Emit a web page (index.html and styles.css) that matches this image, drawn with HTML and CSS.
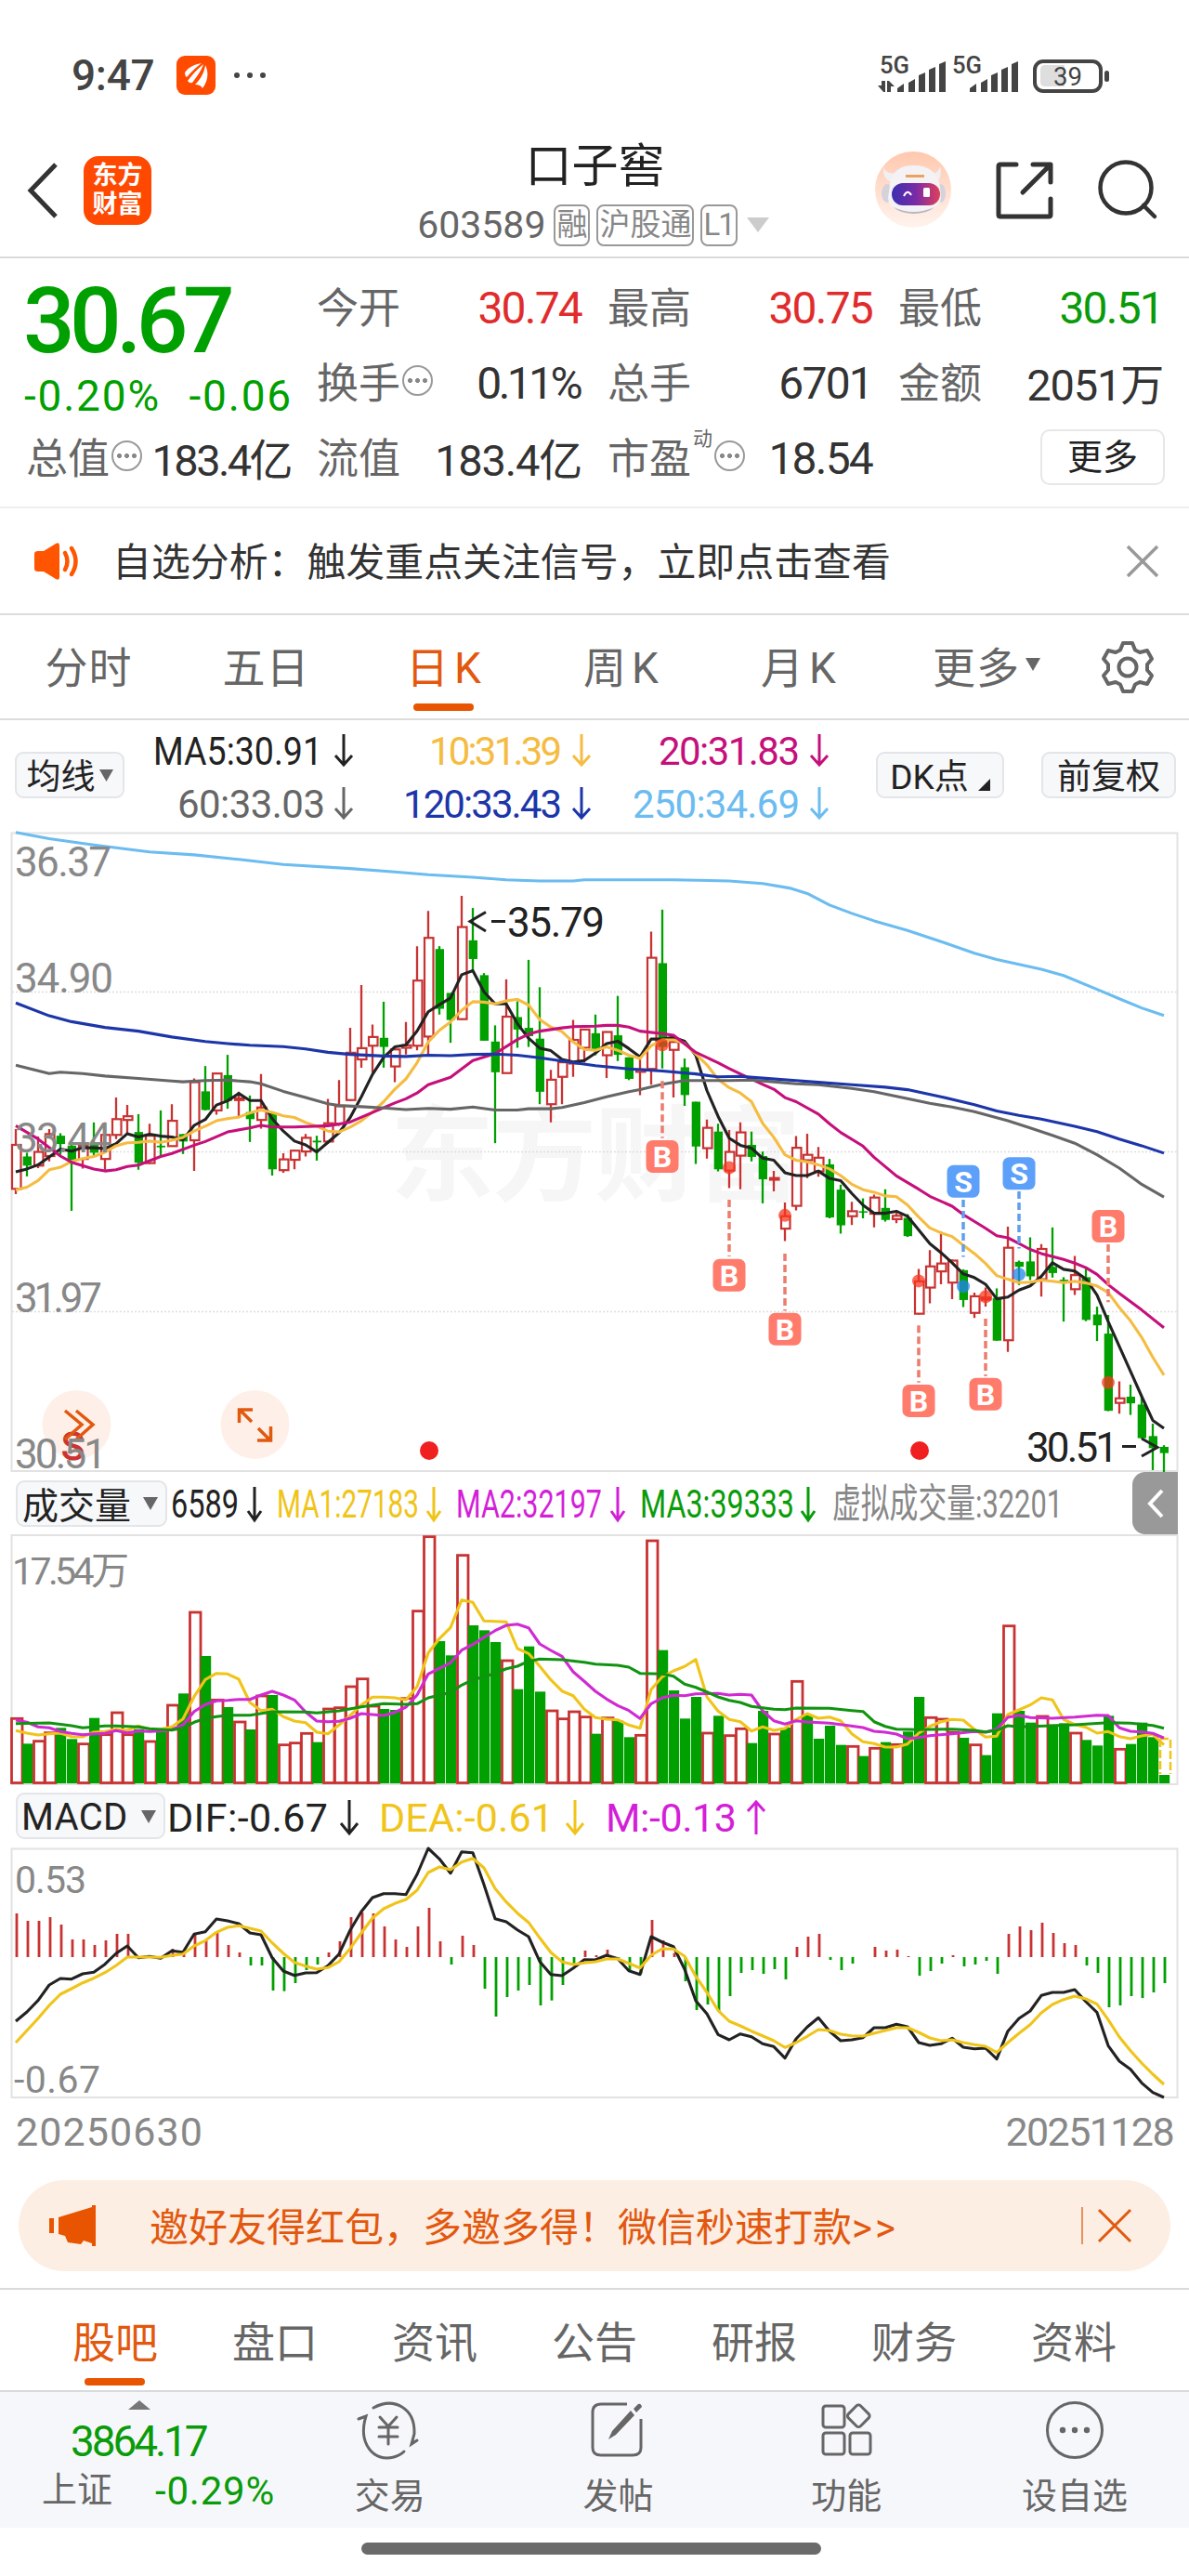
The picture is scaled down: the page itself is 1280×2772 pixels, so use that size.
FILE: index.html
```html
<!DOCTYPE html>
<html lang="zh-CN">
<head>
  <meta charset="UTF-8" />
  <meta name="viewport" content="width=device-width, initial-scale=1" />
  <title>口子窖 603589</title>
  <link rel="stylesheet" href="styles.css">
</head>
<body>
  <div class="status-bar">
    <span class="clock">9:47</span>
    <svg class="app-icon" width="42" height="42" viewBox="0 0 42 42">
      <rect width="42" height="42" rx="9" fill="#ff4a00"/>
      <path d="M9 18 C13 12 20 9 27 8 C19 14 15 19 11 23 Q9 22 9 18Z M12 27 C17 20 23 14 29 9 C27 16 22 22 17 29 Q14 30 12 27Z M20 31 C27 24 30 17 31 10 C35 18 34 27 28 35 Q26 31 20 31Z" fill="#fff"/>
    </svg>
    <svg class="more-dots" width="36" height="10" viewBox="0 0 36 10" fill="#444"><circle cx="4" cy="5" r="3"/><circle cx="18" cy="5" r="3"/><circle cx="32" cy="5" r="3"/></svg>
    <svg class="signals" width="256" height="64" viewBox="940 48 256 64" fill="#444">
      <text x="947" y="78" font-size="25" font-weight="500" textLength="32" lengthAdjust="spacingAndGlyphs">5G</text>
      <text x="1025" y="78" font-size="25" font-weight="500" textLength="32" lengthAdjust="spacingAndGlyphs">5G</text>
      <path d="M949 86h4v12h-2l-6-7h4z M955 98V86h2l6 6h-4v6z"/>
      <path d="M966 98v-4l7-5v9z M978 98V88l7-4v14z M989 98V80l7-3v21z M1000 98V74l7-3v27z M1011 98V68l7-3v33z"/>
      <path d="M1044 98v-4l7-5v9z M1056 98V88l7-4v14z M1067 98V80l7-3v21z M1078 98V74l7-3v27z M1089 98V68l7-3v33z"/>
      <rect x="1114" y="65" width="71" height="32" rx="9" fill="none" stroke="#444" stroke-width="4"/>
      <path d="M1125 69h21v23h-21q-5 0-5-5V74q0-5 5-5z" fill="#dedede"/>
      <rect x="1189" y="75" width="5" height="12" rx="2.5"/>
      <text x="1134" y="91" font-size="28" textLength="31" lengthAdjust="spacingAndGlyphs">39</text>
    </svg>
  </div>

  <header class="header">
    <div class="header-left">
      <svg width="34" height="60" viewBox="0 0 34 60" fill="none" stroke="#333" stroke-width="5"><path d="M31 2 L4 30 L31 58"/></svg>
      <div class="logo"><span>东方</span><span>财富</span></div>
    </div>
    <div class="stock">
      <h1 class="stock-name">口子窖</h1>
      <div class="stock-code">
        <span class="code">603589</span>
        <span class="tag">融</span><span class="tag">沪股通</span><span class="tag level">L1</span>
        <svg width="24" height="16" viewBox="0 0 24 16"><path d="M0 0H24L12 16Z" fill="#ccc"/></svg>
      </div>
    </div>
    <div class="header-right">
      <svg width="82" height="82" viewBox="0 0 82 82">
        <defs>
          <linearGradient id="halo" x1="0" y1="0" x2="0" y2="1"><stop offset="0" stop-color="#ffc8ae"/><stop offset="1" stop-color="#fff4ee"/></linearGradient>
          <linearGradient id="visor" x1="0" y1="0" x2="1" y2="0"><stop offset="0" stop-color="#3a2fb0"/><stop offset=".5" stop-color="#7a2ba6"/><stop offset="1" stop-color="#e0405a"/></linearGradient>
        </defs>
        <circle cx="41" cy="41" r="41" fill="url(#halo)"/>
        <path d="M9 17 Q8 30 18 33 L24 23 Q12 25 9 17Z M70 16 Q73 30 64 34 L58 23 Q68 25 70 16Z" fill="#f2eff2"/>
        <ellipse cx="13" cy="45" rx="6" ry="10" fill="#d5d2da"/><ellipse cx="71" cy="45" rx="5" ry="10" fill="#d5d2da"/>
        <path d="M16 36 Q18 15 42 15 Q66 15 70 38 L71 50 Q68 66 41 66 Q15 65 14 50Z" fill="#f4f2f5"/>
        <path d="M20 60 Q41 70 64 60 Q56 67 41 67 Q26 66 20 60Z" fill="#b9b5c0"/>
        <rect x="33" y="25" width="20" height="3" fill="#eba25f"/>
        <rect x="18" y="34" width="52" height="24" rx="12" fill="url(#visor)"/>
        <path d="M31 48 Q35 40 39 47" fill="none" stroke="#fff" stroke-width="2"/>
        <rect x="52" y="39" width="7" height="10" rx="1.5" fill="#fff"/>
      </svg>
      <svg width="62" height="62" viewBox="0 0 62 62" fill="none" stroke="#333" stroke-width="5" stroke-linecap="round" stroke-linejoin="round"><path d="M22 3H5Q3 3 3 5V57Q3 59 5 59H57Q59 59 59 57V40 M40 3H59V22 M58 4L29 33"/></svg>
      <svg width="64" height="64" viewBox="0 0 64 64" fill="none" stroke="#333" stroke-width="4.5" stroke-linecap="round"><circle cx="30" cy="30" r="27.5"/><path d="M49 49L61 61"/></svg>
    </div>
  </header>

  <section class="quote">
    <div class="quote-main">
      <div class="price">30.67</div>
      <div class="change"><span class="pct">-0.20%</span><span class="diff">-0.06</span></div>
    </div>
    <div class="cell"><span class="label">今开</span><span class="value up">30.74</span></div>
    <div class="cell"><span class="label">最高</span><span class="value up">30.75</span></div>
    <div class="cell"><span class="label">最低</span><span class="value down">30.51</span></div>
    <div class="cell"><span class="label">换手</span><i class="info"></i><span class="value pct-value">0.11%</span></div>
    <div class="cell"><span class="label">总手</span><span class="value">6701</span></div>
    <div class="cell"><span class="label">金额</span><span class="value cn wide">2051万</span></div>
    <div class="cell"><span class="label">总值</span><i class="info"></i><span class="value cn">183.4亿</span></div>
    <div class="cell"><span class="label">流值</span><span class="value cn wide">183.4亿</span></div>
    <div class="cell"><span class="label">市盈</span><sup class="dyn">动</sup><i class="info"></i><span class="value">18.54</span></div>
    <div class="cell"><button class="more-btn">更多</button></div>
  </section>

  <div class="notice">
    <svg width="48" height="40" viewBox="0 0 48 40" fill="#ff5500"><path d="M0 12Q0 9 4 9H10L23 1Q27 -1 27 3V37Q27 41 23 39L10 31H4Q0 31 0 28Z"/><path d="M33 11Q38 20 33 29M40 6Q49 20 40 34" fill="none" stroke="#ff5500" stroke-width="4.5" stroke-linecap="round"/></svg>
    <p>自选分析：触发重点关注信号，立即点击查看</p>
    <svg width="34" height="34" viewBox="0 0 34 34" stroke="#999" stroke-width="3.5"><path d="M1 1L33 33M33 1L1 33"/></svg>
  </div>

  <nav class="period-tabs">
    <a>分时</a><a>五日</a><a class="k active">日K</a><a class="k">周K</a><a class="k">月K</a>
    <a class="more">更多<svg width="16" height="14" viewBox="0 0 16 14"><path d="M0 0H16L8 14Z" fill="#666"/></svg></a>
    <svg class="gear" width="58" height="58" viewBox="-29 -29 58 58" fill="none" stroke="#666" stroke-width="4" stroke-linejoin="round"><path d="M-5 -26H5L8 -18.5L13 -16L21 -18L26 -9L21 -3V3L26 9L21 18L13 16L8 18.5L5 26H-5L-8 18.5L-13 16L-21 18L-26 9L-21 3V-3L-26 -9L-21 -18L-13 -16L-8 -18.5Z"/><circle r="9.5"/></svg>
  </nav>

  <div class="ma-bar">
    <button class="pill ma-btn"><span>均线</span><svg width="15" height="13" viewBox="0 0 15 13"><path d="M0 0H15L7.500 13Z" fill="#666"/></svg></button>
    <svg class="ma-legend" width="744" height="121" viewBox="150 775 744 121">
      <g font-size="42">
        <text x="165" y="822.500" textLength="182" lengthAdjust="spacingAndGlyphs" fill="#222">MA5:30.91</text>
        <text x="462" y="822.500" textLength="143" fill="#f5bc41">10:31.39</text>
        <text x="709" y="822.500" textLength="152" fill="#c5107b">20:31.83</text>
        <text x="191" y="879.500" textLength="159" fill="#666">60:33.03</text>
        <text x="434" y="879.500" textLength="171" fill="#1c35a8">120:33.43</text>
        <text x="681" y="879.500" textLength="180" fill="#6bbcf0">250:34.69</text>
      </g>
      <g fill="none" stroke-width="3">
        <path d="M370 790V823M361 813L370 823L379 813" stroke="#222"/>
        <path d="M626 790V823M617 813L626 823L635 813" stroke="#f5bc41"/>
        <path d="M882 790V823M873 813L882 823L891 813" stroke="#c5107b"/>
        <path d="M370 847V880M361 870L370 880L379 870" stroke="#666"/>
        <path d="M626 847V880M617 870L626 880L635 870" stroke="#1c35a8"/>
        <path d="M882 847V880M873 870L882 880L891 870" stroke="#6bbcf0"/>
      </g>
    </svg>
    <button class="pill dk-btn"><span>DK点</span><svg width="13" height="13" viewBox="0 0 13 13"><path d="M13 0V13H0Z" fill="#222"/></svg></button>
    <button class="pill adj-btn"><span>前复权</span></button>
  </div>

  <svg class="chart" width="1280" height="688" viewBox="0 896 1280 688">
    <text x="420" y="1284" class="watermark" textLength="442">东方财富</text>
    <path d="M13 1067.500H1267M13 1239.500H1267M13 1411.500H1267" stroke="#ddd" stroke-width="1.500" stroke-dasharray="2 2"/>
    <rect x="12.500" y="896.500" width="1255" height="686.500" fill="none" stroke="#e2e2e2" stroke-width="2"/>
    <circle cx="82.500" cy="1533" r="37" fill="#fef0e8"/>
    <circle cx="274.500" cy="1533" r="37" fill="#fef0e8"/>
    <g id="candles"></g>
    <g id="priceLines"></g>
    <text x="66" y="1571" font-size="42" fill="#cc3330" stroke="#cc3330">S</text>
    <path d="M70 1518L88 1533L70 1549M82 1518L100 1533L82 1549" class="orange-line"/>
    <path d="M257.500 1531V1517H272M258 1517L271 1530M291.500 1535V1550H277M291 1550L278 1537" class="orange-line"/>
    <g class="axis">
      <text x="16" y="942.500" textLength="104">36.37</text>
      <text x="16" y="1067.500" textLength="106">34.90</text>
      <text x="16" y="1239.500" textLength="104">33.44</text>
      <text x="16" y="1412" textLength="94">31.97</text>
      <text x="16" y="1580" textLength="99">30.51</text>
    </g>
    <g id="marks"></g>
    <g font-size="44" fill="#222">
      <path d="M523 981.500L506 991.500L523 1002M529 991.500H544M1208 1556.500H1223M1229 1548L1246 1557.500L1229 1567" fill="none" stroke="#222" stroke-width="3"/>
      <text x="546" y="1008" textLength="105">35.79</text>
      <text x="1105" y="1572.500" textLength="99">30.51</text>
    </g>
    <circle cx="462" cy="1561" r="10" fill="#f02020"/>
    <circle cx="990" cy="1561" r="10" fill="#f02020"/>
  </svg>

  <div class="sub-bar">
    <button class="pill sub-btn vol-btn"><span>成交量</span><svg width="16" height="14" viewBox="0 0 16 14"><path d="M0 0H16L8 14Z" fill="#666"/></svg></button>
    <svg class="vol-legend" width="965" height="68" viewBox="181 1584 965 68" font-size="43">
      <text x="184" y="1633" textLength="73" lengthAdjust="spacingAndGlyphs" fill="#222">6589</text>
      <text x="298" y="1633" textLength="153" lengthAdjust="spacingAndGlyphs" fill="#f0c419">MA1:27183</text>
      <text x="491" y="1633" textLength="157" lengthAdjust="spacingAndGlyphs" fill="#d41fd8">MA2:32197</text>
      <text x="689" y="1633" textLength="166" lengthAdjust="spacingAndGlyphs" fill="#0a9b0a">MA3:39333</text>
      <text x="896" y="1633" textLength="248" lengthAdjust="spacingAndGlyphs" fill="#888">虚拟成交量:32201</text>
      <g fill="none" stroke-width="3">
        <path d="M274 1600V1636M267 1626L274 1636L281 1626" stroke="#222"/>
        <path d="M467 1600V1636M460 1626L467 1636L474 1626" stroke="#f0c419"/>
        <path d="M665 1600V1636M658 1626L665 1636L672 1626" stroke="#d41fd8"/>
        <path d="M870 1600V1636M863 1626L870 1636L877 1626" stroke="#0a9b0a"/>
      </g>
    </svg>
    <button class="collapse"><svg width="18" height="32" viewBox="0 0 18 32" fill="none" stroke="#fff" stroke-width="4"><path d="M16 2L3 16L16 30"/></svg></button>
  </div>

  <svg class="chart" width="1280" height="268" viewBox="0 1652 1280 268">
    <rect x="12.500" y="1652" width="1255" height="268" fill="none" stroke="#e2e2e2" stroke-width="2"/>
    <text x="13" y="1705" font-size="41" fill="#888" textLength="126">17.54万</text>
    <g id="volumes"></g>
    <path d="M1249 1871H1260V1909M1249 1871V1909" fill="none" stroke="#f0c419" stroke-width="2.500" stroke-dasharray="9 3"/>
    <g id="volumeLines"></g>
  </svg>

  <div class="sub-bar macd-bar">
    <button class="pill sub-btn">MACD<svg width="16" height="14" viewBox="0 0 16 14"><path d="M0 0H16L8 14Z" fill="#666"/></svg></button>
    <svg class="macd-legend" width="660" height="69" viewBox="180 1920 660 69" font-size="43">
      <text x="180" y="1971" textLength="173" fill="#222">DIF:-0.67</text>
      <text x="408" y="1971" textLength="188" fill="#f0c419">DEA:-0.61</text>
      <text x="652" y="1971" textLength="141" fill="#d41fd8">M:-0.13</text>
      <g fill="none" stroke-width="3">
        <path d="M376 1937V1973M367 1962L376 1973L385 1962" stroke="#222"/>
        <path d="M619 1937V1973M610 1962L619 1973L628 1962" stroke="#f0c419"/>
        <path d="M814 1974V1939M805 1949L814 1939L823 1949" stroke="#d41fd8"/>
      </g>
    </svg>
  </div>

  <svg class="chart" width="1280" height="269" viewBox="0 1989 1280 269">
    <rect x="12.500" y="1989.500" width="1255" height="267.500" fill="none" stroke="#e2e2e2" stroke-width="2"/>
    <g id="macdBars"></g>
    <g id="macdLines"></g>
    <g class="axis small">
      <text x="16" y="2037" textLength="77">0.53</text>
      <text x="15" y="2252" textLength="93">-0.67</text>
    </g>
  </svg>
  <div class="dates"><span>20250630</span><span class="date-end">20251128</span></div>

  <div class="invite">
    <svg width="50" height="44" viewBox="0 0 50 44" fill="#e85400"><path d="M0 14H5V30H0Z M10 13L46 2V0H50V44H46V41L37 38L34 42L20 40L17 33L10 31Z"/></svg>
    <p>邀好友得红包，多邀多得！微信秒速打款<span class="arrows">&gt;&gt;</span></p>
    <i class="invite-sep"></i>
    <svg width="36" height="36" viewBox="0 0 36 36" stroke="#e2580e" stroke-width="3"><path d="M1 1L35 35M35 1L1 35"/></svg>
  </div>

  <nav class="info-tabs">
    <a class="active">股吧</a><a>盘口</a><a>资讯</a><a>公告</a><a>研报</a><a>财务</a><a>资料</a>
  </nav>

  <footer class="toolbar">
    <div class="index">
      <svg width="24" height="10" viewBox="0 0 24 10"><path d="M12 0L24 10H0Z" fill="#777"/></svg>
      <div class="index-value">3864.17</div>
      <div class="index-row"><span class="index-name">上证</span><span class="index-pct">-0.29%</span></div>
    </div>
    <div class="tool">
      <svg width="72" height="66" viewBox="384 2584 72 66" fill="none" stroke="#666" stroke-width="3" stroke-linecap="round"><path d="M402 2592C424 2580 447 2592 446 2620L443 2631L449 2627 M386 2604L394 2601C385 2630 402 2651 424 2645Q431 2643 435 2639"/><path d="M409 2602L418 2612L427 2602M418 2612V2631M408 2613H428M408 2623H428"/></svg>
      <span>交易</span>
    </div>
    <div class="tool">
      <svg width="60" height="66" viewBox="618 2584 60 66" fill="none" stroke="#666" stroke-width="3"><path d="M658 2588H630Q621 2588 621 2597V2635Q621 2643 630 2643H664Q673 2643 673 2635V2604"/><path d="M638 2626L642 2617L662 2595L666 2600L646 2621Z M665 2593L670 2588Q673 2587 674 2591L668 2597Z" fill="#666" stroke="none"/></svg>
      <span>发帖</span>
    </div>
    <div class="tool">
      <svg width="60" height="66" viewBox="846 2584 60 66" fill="none" stroke="#666" stroke-width="3"><rect x="851" y="2590" width="23" height="23" rx="3"/><rect x="851" y="2619" width="23" height="23" rx="3"/><rect x="880" y="2619" width="22" height="23" rx="3"/><rect x="880" y="2591.500" width="18.500" height="18.500" rx="3" transform="rotate(45 889.250 2600.750)"/></svg>
      <span>功能</span>
    </div>
    <div class="tool">
      <svg width="66" height="66" viewBox="0 0 66 66" fill="none" stroke="#666" stroke-width="3"><circle cx="33" cy="32" r="29.500"/><g fill="#666" stroke="none"><circle cx="20" cy="32" r="3.200"/><circle cx="33" cy="32" r="3.200"/><circle cx="46" cy="32" r="3.200"/></g></svg>
      <span>设自选</span>
    </div>
  </footer>
  <div class="home-area"><div class="home-bar"></div></div>

  <script src="chart.js"></script>
</body>
</html>
```
FILE: styles.css
```css
* {
  box-sizing: border-box;
}
html, body {
  margin: 0; padding: 0;
  background: #fff;
  font-family: Roboto, "Noto Sans CJK SC", sans-serif;
  color: #333;
}
body {
  width: 1280px;
  height: 2772px;
  overflow: hidden;
}
svg {
  display: block;
  flex: none;
  overflow: visible;
}
button {
  font-family: inherit;
  padding: 0;
}
p, h1 {
  margin: 0;
}

/* status bar */
.status-bar {
  height: 130px;
  padding: 32px 84px 0 77px;
  display: flex;
  align-items: center;
}
.clock {
  font-size: 46px;
  font-weight: 500;
  color: #444;
  width: 113px;
  letter-spacing: -0.3px;
}
.more-dots {
  margin-left: 19px;
}
.signals {
  margin-left: auto;
}

/* header */
.header {
  height: 148px;
  padding: 0 34px 0 29px;
  border-bottom: 2px solid #d8dadb;
  display: flex;
  justify-content: space-between;
}
.header-left {
  width: 300px;
  padding-top: 38px;
  display: flex;
  align-items: flex-start;
}
.header-left > svg {
  margin-top: 7px;
}
.logo {
  width: 73px;
  height: 74px;
  margin-left: 27px;
  padding-top: 6px;
  border-radius: 16px;
  background: #ff4800;
  color: #fff;
  font-size: 27px;
  font-weight: bold;
  line-height: 31px;
  text-align: center;
}
.logo span {
  display: block;
}
.stock {
  padding-left: 6px;
}
.stock-name {
  margin-top: 20px;
  font-size: 50px;
  line-height: 58px;
  font-weight: normal;
  color: #222;
  text-align: center;
  padding-left: 4px;
}
.stock-code {
  margin-top: 11px;
  height: 46px;
  display: flex;
  align-items: center;
  gap: 7px;
  color: #888;
}
.code {
  font-size: 41px;
  color: #666;
  margin-right: 2px;
}
.tag {
  height: 45px;
  padding: 0 1px;
  border: 2px solid #999;
  border-radius: 8px;
  font-size: 33px;
  line-height: 39px;
}
.level {
  letter-spacing: -2px;
  padding: 0 2px 0 1px;
}
.stock-code svg {
  margin-left: 3px;
}
.header-right {
  display: flex;
  gap: 48px;
  padding-top: 33px;
}
.header-right svg:nth-child(2) {
  margin-top: 11px;
}
.header-right svg:nth-child(3) {
  margin: 9px 0 0 0;
}

/* quote */
.quote {
  height: 269px;
  padding: 12px 28px 0;
  display: grid;
  grid-template-columns: repeat(4, 285px);
  grid-template-rows: repeat(3, 81px);
  column-gap: 28px;
  border-bottom: 2px solid #eceef0;
}
.quote-main {
  grid-row: span 2;
  color: #00a000;
}
.price {
  margin: 11px 0 0 -3px;
  font-size: 98px;
  font-weight: 500;
  line-height: 90px;
  letter-spacing: -5.6px;
}
.change {
  margin: 7px 0 0 -2px;
  display: flex;
  justify-content: space-between;
  font-size: 46px;
  line-height: 56px;
}
.pct {
  letter-spacing: 1.8px;
}
.diff {
  letter-spacing: 1.8px;
  margin-right: -2px;
}
.cell {
  display: flex;
  align-items: center;
}
.label {
  font-size: 45px;
  line-height: 60px;
  margin-top: 4px;
  color: #666;
  white-space: nowrap;
}
.value {
  margin: 2px 0 0 auto;
  font-size: 48px;
  letter-spacing: -1.8px;
  white-space: nowrap;
}
.pct-value {
  letter-spacing: -3.6px;
  padding-right: 2px;
}
.cn {
  letter-spacing: -2.6px;
  font-size: 47px;
  margin-top: -3px;
}
.cn.wide {
  letter-spacing: -1.2px;
}
.up {
  color: #e02c2c;
}
.down {
  color: #0a9b0a;
}
.info {
  width: 33px;
  height: 33px;
  margin: -4px 0 0 2px;
  border: 2px solid #999;
  border-radius: 50%;
  background:
    radial-gradient(circle, #888 2.2px, transparent 2.8px) -8px 0 / 29px 29px no-repeat,
    radial-gradient(circle, #888 2.2px, transparent 2.8px) 0 0 / 29px 29px no-repeat,
    radial-gradient(circle, #888 2.2px, transparent 2.8px) 8px 0 / 29px 29px no-repeat;
}
.dyn {
  font-size: 21px;
  line-height: 24px;
  align-self: flex-start;
  margin: 8px 0 0 2px;
  color: #666;
}
.more-btn {
  width: 134px;
  height: 60px;
  margin: -2px -2px 0 auto;
  border: 2px solid #e5e7e9;
  border-radius: 10px;
  background: #fff;
  font-size: 38px;
  line-height: 50px;
  color: #222;
}

/* notice */
.notice {
  height: 115px;
  padding: 0 33px 0 37px;
  border-bottom: 2px solid #dcdcdc;
  display: flex;
  align-items: center;
}
.notice p {
  margin: -4px auto 0 36px;
  font-size: 41.9px;
}

/* period tabs */
.period-tabs {
  height: 113px;
  border-bottom: 2px solid #dcdcdc;
  display: flex;
}
.period-tabs a {
  width: 191px;
  padding-bottom: 5px;
  display: flex;
  align-items: center;
  justify-content: center;
  font-size: 46px;
  letter-spacing: 1px;
  color: #666;
  position: relative;
}
.period-tabs .k {
  letter-spacing: 6px;
  padding-left: 6px;
}
.period-tabs .more {
  gap: 6px;
  padding-left: 23px;
}
.period-tabs .active, .info-tabs .active {
  color: #e2580e;
}
.active::after {
  content: "";
  position: absolute;
  bottom: 8px;
  left: calc(50% - 33px);
  width: 65px;
  height: 8px;
  border-radius: 4px;
  background: #e85400;
}
.gear {
  margin: 27px 0 0 39px;
}

/* moving average row */
.pill {
  height: 50px;
  border: 2px solid #e3e5e9;
  border-radius: 9px;
  background: #f7f8fa;
  color: #222;
  display: flex;
  align-items: center;
  justify-content: center;
}
.pill span {
  margin-top: -3px;
}
.ma-bar {
  height: 121px;
  padding: 0 14px 0 16px;
  display: flex;
  align-items: center;
}
.ma-bar .pill {
  margin-top: -3px;
  font-size: 37px;
}
.ma-btn {
  width: 118px;
  gap: 4px;
}
.ma-legend {
  margin-left: 16px;
}
.dk-btn {
  width: 138px;
  margin-left: 49px;
  gap: 10px;
}
.dk-btn svg {
  align-self: flex-end;
  margin-bottom: 6px;
}
.adj-btn {
  width: 145px;
  margin-left: auto;
}

/* charts */
.watermark {
  font-size: 112px;
  font-weight: bold;
  fill: #f6f6f6;
}
.axis {
  font-size: 44px;
  fill: #888;
}
.axis.small {
  font-size: 41px;
}
.orange-line {
  fill: none;
  stroke: #e2580e;
  stroke-width: 3.500px;
}
.mark-text {
  font-size: 32px;
  font-weight: bold;
  fill: #fff;
  text-anchor: middle;
}
.sub-bar {
  height: 68px;
  padding: 0 12px 0 17px;
  display: flex;
}
.macd-bar {
  height: 69px;
}
.sub-btn {
  width: 163px;
  margin-top: 9px;
  justify-content: space-between;
  padding: 0 8px 0 5px;
  font-size: 39px;
}
.macd-bar .sub-btn {
  width: 161px;
  padding-left: 4px;
  padding-top: 2px;
  font-size: 40px;
  letter-spacing: 0.3px;
}
.vol-legend {
  margin-left: 1px;
}
.macd-legend {
  margin-left: 2px;
}
.collapse {
  width: 49px;
  height: 67px;
  margin-left: auto;
  border: none;
  border-radius: 14px 0 0 14px;
  background: #999;
  display: flex;
  align-items: center;
  justify-content: center;
}
.dates {
  height: 88px;
  padding: 7px 17px 0;
  display: flex;
  justify-content: space-between;
  font-size: 43px;
  line-height: 58px;
  letter-spacing: 1.1px;
  color: #888;
}
.date-end {
  letter-spacing: -1.6px;
}

/* invite banner */
.invite {
  height: 98px;
  margin: 0 20px 18px;
  padding: 0 42px 0 33px;
  border-radius: 49px;
  background: #fdeee4;
  color: #e2580e;
  display: flex;
  align-items: center;
}
.invite p {
  margin: -4px auto 0 58px;
  font-size: 42px;
}
.arrows {
  letter-spacing: 3px;
}
.invite-sep {
  width: 2px;
  height: 40px;
  margin-right: 16px;
  background: #e8905f;
}

.info-tabs {
  height: 112px;
  padding: 0 38px;
  border-top: 2px solid #d8dadb;
  border-bottom: 2px solid #d8dadb;
  display: flex;
}
.info-tabs a {
  flex: 1;
  padding-bottom: 2px;
  display: flex;
  align-items: center;
  justify-content: center;
  font-size: 46px;
  color: #666;
  position: relative;
}
.info-tabs .active::after {
  bottom: 5px;
}

/* bottom toolbar */
.toolbar {
  height: 146px;
  background: #f6f7fa;
  display: flex;
}
.index {
  width: 297px;
  padding: 9px 0 0 45px;
  color: #0a9b0a;
}
.index > svg {
  margin-left: 93px;
}
.index-value {
  margin: 9px 0 0 31px;
  font-size: 46px;
  line-height: 50px;
  letter-spacing: -3.1px;
}
.index-row {
  display: flex;
  gap: 46px;
  margin-top: 3px;
  font-size: 42px;
  line-height: 52px;
  white-space: nowrap;
}
.index-name {
  flex: none;
  color: #666;
  font-size: 38px;
  margin-top: -2px;
}
.index-pct {
  letter-spacing: 0.8px;
}
.tool {
  width: 246px;
  padding-top: 9px;
  display: flex;
  flex-direction: column;
  align-items: center;
  color: #666;
  font-size: 38px;
  line-height: 56px;
}
.tool span {
  margin-top: 9px;
}
.home-area {
  padding: 16px 8px 0 0;
  display: flex;
  justify-content: center;
}
.home-bar {
  width: 495px;
  height: 13px;
  border-radius: 7px;
  background: #6a6a6a;
}
```
FILE: chart.js
```js
const RED = '#c83232';
const GREEN = '#00a000';
const STEP = 12;

const px = i => 17 + i * STEP;
const priceY = v => 890 + v / 2.24;
const volY = v => 1580 + v / 3;
const macdY = v => 1920 + v / 3;

// colour, wick top, wick bottom, body top, body bottom
const candles = `R728,885,766,872 G785,842,794,816 R746,822,783,816 R728,806,740,793 G738,790,744,764 G765,925,768,803
R765,823,768,800 G712,792,765,785 R712,826,742,800 R652,752,704,742 R670,740,697,706 G692,826,735,809 R715,812,744,810
G683,792,768,772 R668,770,708,769 G740,788,740,758 R606,829,615,755 G576,683,637,682 R592,693,594,683 G549,679,598,660
R638,697,654,658 G647,759,687,704 R595,727,676,706 G690,840,690,825 R786,833,801,827 R778,825,780,802 R740,794,749,782
G744,804,756,760 R655,764,714,758 R610,720,673,715 R484,660,544,658 R381,580,533,560 R476,592,506,527 G421,580,508,530
R530,615,536,577 R470,548,526,532 R287,538,370,527 R202,550,267,505 G287,452,294,438 G400,520,400,465 R166,465,241,463
G195,350,273,318 G352,514,357,515 G478,762,517,591 R367,593,457,593 G420,532,458,488 G320,530,484,504 G386,668,510,638
R585,712,609,668 R560,668,567,602 R465,602,513,570 R486,568,488,532 G452,550,497,535 R492,605,494,550 G407,564,502,549
G555,610,555,607 R555,646,584,590 R252,621,315,583 G199,582,328,530 R515,652,518,537 G558,672,579,646 G662,812,662,770
R705,799,725,774 G715,830,734,825 R730,870,783,828 R712,873,736,792 G734,806,766,795 G782,907,793,849 R829,878,846,850
R905,998,938,968 R745,924,773,913 R739,846,790,803 R771,843,797,830 G800,943,813,941 G862,980,874,960 R903,959,926,938
G895,943,926,929 R886,965,893,932 G873,951,918,947 R930,955,937,945 G933,988,942,986 R1065,1175,1095,1173 R1020,1148,1059,1110
R975,1102,1052,1071 R1042,1138,1045,1098 G1066,1157,1068,1140 R1122,1183,1131,1171 R1110,1156,1134,1139 G1112,1238,1135,1238
R963,1265,1014,1237 G1045,1104,1048,1060 G989,1092,1047,1083 R1005,1132,1017,1090 G965,1086,1060,1075 G1085,1192,1091,1095
R1034,1128,1080,1114 G1062,1191,1085,1188 G1156,1239,1175,1201 G1176,1408,1221,1407 R1336,1414,1377,1388 G1344,1417,1373,1389
G1372,1474,1392,1473 G1438,1550,1468,1497 G1490,1555,1494,1509`.split(/\s+/);

// bar tops, negative for a down day
const volumes = [805,-889,878,851,-838,-874,887,-806,857,786,857,-842,879,-850,762,-727,462,-606,745,-771,816,-843,732,-732,
  890,884,853,-884,774,770,702,677,765,-777,-780,740,458,218,-558,-604,278,-507,-523,-561,618,-713,-575,-721,780,806,783,800,
  -857,803,-815,-868,859,231,-587,-717,-808,-738,852,-799,860,838,-887,-783,855,-837,685,-797,-873,-831,-893,895,-929,901,
  -884,889,-850,-738,802,807,850,-870,890,-926,-791,506,-783,-821,798,-827,-823,852,-877,-895,-799,904,-890,-821,-868,-990];

const macd = [417,441,441,429,453,501,501,519,504,483,483,558,552,564,531,540,480,504,474,519,543,585,585,666,668,642,600,582,
  543,507,429,414,417,459,501,525,459,399,507,582,489,519,660,750,687,666,648,714,698,648,585,537,552,534,560,600,612,438,504,
  545,636,729,711,732,684,609,600,612,597,630,525,492,483,567,600,579,558,525,537,534,555,618,603,579,552,588,582,570,612,483,
  459,471,447,480,513,519,585,609,720,714,684,690,672,642];

const ma250 = '0,13 3,28 7,43 12,60 16,67 20,78 24,90 30,100 34,108 37,115 41,121 44,127 47,130 50,130 51,127 59,127 64,130 67,136 69.4,147 71,160 73,188 75,208 77,226 80,249 83,276 86,304 88,319 90,331 92,343 94,358 97,391 99,414 101,436 103,454';
const ma120 = '0,424 3,455 5,469 8,483 11,492 14,506 17,517 19,522 21,526 24,529 26,535 28,543 30,548 33,552 35,553 37,550 39,551 41,548 43,547 45,550 47,556 49,564 52,575 55,583 58,588 61,595 63,602 65,601 67,605 70,611 72,615 75,621 78,627 80,633 83,650 86,669 88,684 90,695 92,704 95,721 97,734 99,752 101,768 103,786';
const ma60 = '0,574 3,594 4,591 6,594 8,600 11,606 14,612 15,614 17,611 19,610 21,614 22,619 24,637 26,652 28,667 29,671 31,674 33,677 35,681 37,678 39,680 41,675 43,682 45,682 46,679 48,679 49,676 51,664 53,650 55,638 56,633 58,620 60,611 64,611 66,610 68,614 70,619 72,621 75,630 77,638 79,649 82,666 84,675 86,686 89,708 91,725 93,743 95,762 97,790 99,822 101,861 103,892';
const ma20 = '0,720 2,752 4,793 5,808 7,824 8,829 9,826 10,818 11,815 13,794 14,787 16,767 17,758 19,735 21,725 22,719 23,723 25,723 28,720 29,716 30,711 32,688 34,665 35,655 36,641 37,621 39,603 41,563 43,546 45,512 46,499 47,492 49,484 50,481 52,480 53,478 54,478 55,482 56,492 58,498 59,502 61,543 63,568 64,582 65,595 67,620 68,632 69,652 70,662 72,692 73,715 74,736 76,769 77,796 79,841 81,873 82,890 84,914 85,934 87,967 88,985 89,990 90,1004 91,1018 92,1028 94,1042 95,1051 96,1062 97,1078 98,1103 99,1124 101,1164 103,1207';
const ma10 = '0,875 1,868 2,852 3,826 4,820 5,806 6,799 7,794 8,784 9,768 10,761 11,760 12,757 13,760 14,755 15,748 16,733 17,721 18,708 19,703 20,699 21,689 22,682 23,688 24,696 25,700 26,712 27,721 28,733 29,735 30,723 31,708 32,687 33,662 34,632 35,607 36,568 37,518 38,490 39,470 40,442 41,421 42,422 43,426 44,419 45,415 46,429 47,464 48,482 49,493 50,518 51,536 52,538 53,530 54,538 55,550 56,558 57,527 58,513 59,513 60,521 61,547 62,573 63,608 64,628 65,641 66,662 67,714 68,748 69,790 70,803 71,807 72,814 73,824 74,840 75,861 76,874 77,880 78,889 79,891 80,911 81,940 82,966 83,978 84,987 85,1008 86,1028 87,1052 88,1081 89,1090 90,1098 91,1097 92,1092 93,1095 94,1098 95,1095 96,1099 97,1106 98,1122 99,1158 100,1190 101,1230 102,1278 103,1321';
const ma5 = '0,831 1,824 2,814 3,795 4,776 5,781 6,773 7,773 8,775 9,763 10,739 11,747 12,740 13,745 14,747 15,754 16,719 17,705 18,670 19,660 20,642 21,659 22,659 23,703 24,733 25,757 26,766 27,783 28,760 29,737 30,700 31,650 32,596 33,555 34,530 35,525 36,492 37,445 38,428 39,412 40,356 41,346 42,397 43,426 44,426 45,474 46,509 47,533 48,539 49,560 50,566 51,563 52,545 53,522 54,516 55,534 56,554 57,511 58,511 59,507 60,516 61,550 62,635 63,697 64,750 65,767 66,774 67,798 68,803 69,833 70,840 71,840 72,829 73,847 74,852 75,883 76,911 77,931 78,931 79,926 80,938 81,971 82,1004 83,1026 84,1050 85,1077 86,1086 87,1102 88,1137 89,1133 90,1116 91,1106 92,1083 93,1050 94,1066 95,1070 96,1089 97,1128 98,1192 99,1252 100,1312 101,1372 102,1430 103,1449';

const volMa1 = '0,847 1,855 2,861 3,857 4,855 5,866 6,867 7,852 8,850 9,842 10,846 11,832 12,843 13,842 14,835 15,809 16,737 17,682 18,662 19,664 20,681 21,756 22,782 23,778 24,802 25,816 26,821 27,852 28,857 29,829 30,798 31,764 32,739 33,739 34,741 35,748 36,705 37,596 38,550 39,514 40,425 41,433 42,493 43,494 44,496 45,582 46,598 47,639 48,683 49,719 50,734 51,778 52,805 53,810 54,812 55,829 56,839 57,714 58,673 59,654 60,640 61,617 62,738 63,784 64,811 65,818 66,848 67,835 68,846 69,840 70,811 71,792 72,807 73,803 74,815 75,857 76,883 77,889 78,900 79,900 80,890 81,855 82,833 83,818 84,811 85,813 86,843 87,868 88,865 89,795 90,780 91,764 92,741 93,748 94,811 95,827 96,836 97,855 98,850 99,866 100,873 101,864 102,859 103,893';
const volMa2 = '0,813 1,820 2,835 3,838 4,850 5,856 6,860 7,857 8,856 9,847 10,854 11,848 12,850 13,848 14,844 15,829 16,785 17,763 18,751 19,749 20,746 21,746 22,732 23,720 24,732 25,748 26,787 27,816 28,818 29,817 30,807 31,792 32,795 33,798 34,788 35,771 36,732 37,664 38,646 39,628 40,587 41,569 42,546 43,524 44,507 45,503 46,515 47,567 48,588 49,607 50,657 51,688 52,720 53,745 54,766 55,782 56,808 57,760 58,741 59,733 60,734 61,728 63,727 64,732 65,730 66,732 67,783 68,815 69,826 70,815 71,819 73,823 74,827 76,837 77,849 78,852 79,858 80,873 81,869 82,863 84,857 86,850 87,852 88,842 89,804 90,797 91,805 93,807 95,803 97,797 98,798 99,838 100,849 101,851 102,856 103,871';
const volMa3 = '0,824 3,822 5,831 6,838 8,832 9,832 11,835 12,841 14,845 15,838 16,820 17,808 18,802 19,797 21,797 23,786 26,787 27,790 29,783 31,770 33,760 35,762 36,760 37,741 39,724 40,700 41,683 43,662 44,647 45,639 46,623 47,616 49,618 51,626 52,632 54,636 55,642 56,662 58,664 59,671 60,697 61,707 62,722 63,738 64,749 65,756 66,769 68,778 69,779 70,774 73,775 75,782 76,785 77,818 78,833 79,842 81,844 84,842 86,846 87,851 88,846 89,831 90,835 93,831 95,828 98,821 100,823 102,830 103,839';

const dif = [765,735,698,648,627,629,612,607,581,546,522,560,556,562,538,542,484,476,435,441,450,480,486,560,603,617,609,608,586,548,471,411,366,353,353,356,291,207,241,287,218,221,324,434,444,470,492,572,614,618,594,566,567,552,563,602,614,492,510,524,597,699,741,808,825,806,815,838,847,884,822,784,754,797,828,825,818,786,786,775,783,834,843,838,820,849,854,852,887,797,756,732,682,672,672,663,702,737,844,894,920,964,995,1011];
const dea = [834,795,756,714,678,660,641,626,608,585,558,558,558,559,553,548,522,505,478,462,457,465,474,512,546,575,587,597,592,573,530,480,432,402,385,372,342,285,267,276,251,239,270,337,380,416,446,496,543,573,582,577,573,564,564,578,593,552,531,532,555,620,672,730,765,780,797,812,828,850,834,814,792,795,807,812,813,804,795,786,786,801,819,828,825,834,841,846,866,834,804,776,738,711,695,684,693,710,760,816,860,900,936,969];

// letter, x, badge centre, dash start, dash end, dot centre
const marks = [
  ['B', 713, 794, 612, 750, 525], ['B', 785, 1080, 898, 1035, 821], ['B', 845, 1210, 1028, 1166, 936],
  ['B', 989, 1383, 1201, 1339, 1094], ['B', 1061, 1367, 1185, 1323, 1132], ['B', 1193, 962, 1006, 1145, 1339],
  ['S', 1037, 854, 898, 1036, 1107], ['S', 1097, 835, 878, 1016, 1078]
];

function fill(id, html) {
  document.getElementById(id).innerHTML = html;
}

function line(points, y, color, width = 3.1) {
  const list = typeof points === 'string' ? points.split(' ').map(p => p.split(',').map(Number)) : points.map((v, i) => [i, v]);
  const d = list.map(([i, v]) => px(i) + ',' + y(v).toFixed(1)).join(' ');
  return `<polyline points="${d}" fill="none" stroke="${color}" stroke-width="${width}" stroke-linejoin="round"/>`;
}

fill('candles', candles.map((c, i) => {
  const [wt, wb, bt, bb] = c.slice(1).split(',').map(v => priceY(Number(v)));
  const x = px(i);
  const h = Math.max(bb - bt, 1.5);
  if (c[0] === 'G') {
    return `<path d="M${x} ${wt}V${wb}" stroke="${GREEN}" stroke-width="2.300"/><rect x="${x - 4.3}" y="${bt}" width="9.300" height="${h}" fill="${GREEN}"/>`;
  }
  return `<path d="M${x} ${wt}V${bt}M${x} ${bb}V${wb}" stroke="${RED}" stroke-width="2.300"/><rect x="${x - 4}" y="${bt}" width="9.500" height="${h}" fill="#fff" stroke="${RED}" stroke-width="2.200"/>`;
}).join(''));

fill('priceLines',
  line(ma250, priceY, '#6bbcf0') + line(ma5, priceY, '#222') + line(ma10, priceY, '#f5bc41') +
  line(ma20, priceY, '#c5107b') + line(ma60, priceY, '#666') + line(ma120, priceY, '#1c35a8'));

fill('marks', marks.map(([t, x, c, from, to, dot]) => {
  const buy = t === 'B';
  const cy = priceY(c);
  return `<path d="M${x} ${priceY(from)}V${priceY(to)}" stroke="${buy ? '#ec7c6c' : '#5f9fee'}" stroke-width="3.500" stroke-dasharray="8 4"/>
    <circle cx="${x}" cy="${priceY(dot)}" r="7" fill="${buy ? '#f9371f' : '#2184f0'}" fill-opacity=".75"/>
    <rect x="${x - 17.5}" y="${cy - 17.5}" width="35" height="35" rx="7" fill="${buy ? '#ff7b6b' : '#5ca0fa'}"/>
    <text x="${x}" y="${cy + 11.5}" class="mark-text">${t}</text>`;
}).join(''));

fill('volumes', volumes.map((v, i) => {
  const x = px(i);
  const top = volY(Math.abs(v));
  if (v < 0) return `<rect x="${x - 5}" y="${top}" width="11.200" height="${1919 - top}" fill="${GREEN}"/>`;
  return `<rect x="${x - 4.5}" y="${top + 1}" width="11.500" height="${1917.500 - top}" fill="#fff" stroke="${RED}" stroke-width="2.800"/>`;
}).join(''));
fill('volumeLines', line(volMa1, volY, '#f0c419') + line(volMa2, volY, '#d02ad2') + line(volMa3, volY, '#109410'));

fill('macdBars', macd.map((v, i) =>
  `<path d="M${px(i) + 1} ${macdY(558)}V${macdY(v)}" stroke="${v < 558 ? RED : GREEN}" stroke-width="2.800"/>`).join(''));
fill('macdLines', line(dif, macdY, '#222') + line(dea, macdY, '#f0c419'));
```
